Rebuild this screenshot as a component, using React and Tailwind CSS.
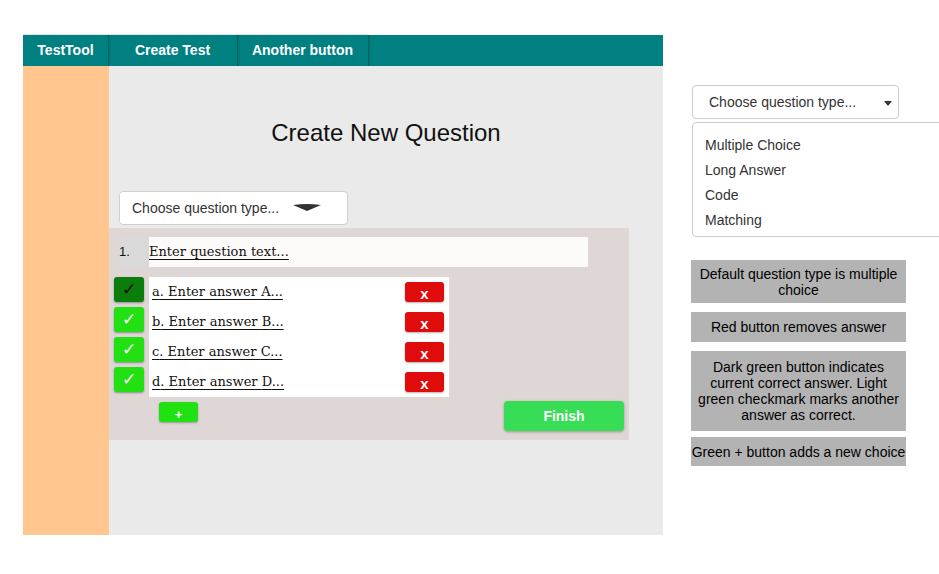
import React from "react";

const serif = { fontFamily: '"DejaVu Serif", "Liberation Serif", serif' };

function AnswerRow({ letter, correct }) {
  return (
    <div className="flex h-[30px] items-start">
      <div
        className={
          "mt-0 flex h-[25px] w-[30px] items-center justify-center rounded-[3px] shadow-[0_1px_2px_rgba(0,0,0,0.35)] text-[17px] font-bold " +
          (correct ? "bg-[#0a7d0a] text-[#111]" : "bg-[#22e012] text-white")
        }
        style={{ fontFamily: '"DejaVu Sans", sans-serif' }}
      >
        ✓
      </div>
      <div className="ml-[5px] flex h-[30px] w-[300px] items-start bg-white">
        <span
          className="ml-[3px] mt-[6px] text-[13px] leading-[18px] text-[#111] underline underline-offset-[3px]"
          style={serif}
        >
          {letter}. Enter answer {letter.toUpperCase()}...
        </span>
        <div className="ml-auto mr-[5px] mt-[5px] flex h-[20px] w-[39px] items-end justify-center rounded-[3px] bg-[#e00b0b] pb-[1px] text-[15px] font-bold leading-[15px] text-white shadow-[0_1px_2px_rgba(0,0,0,0.3)]">
          x
        </div>
      </div>
    </div>
  );
}

export default function App() {
  return (
    <div
      className="flex h-[574px] w-[939px] overflow-hidden bg-white pl-[23px] pt-[35px]"
      style={{ fontFamily: '"Liberation Sans", Arial, sans-serif' }}
    >
      {/* Left frame */}
      <div className="flex h-[500px] w-[640px] shrink-0 flex-col">
        <div className="flex h-[31px] bg-[#008080] text-[14px] font-bold text-white">
          <div className="flex w-[85px] items-center justify-center shadow-[1px_0_2px_rgba(0,0,0,0.35)]">TestTool</div>
          <div className="flex w-[129px] items-center justify-center shadow-[1px_0_2px_rgba(0,0,0,0.35)]">Create Test</div>
          <div className="flex w-[131px] items-center justify-center shadow-[1px_0_2px_rgba(0,0,0,0.35)]">Another button</div>
        </div>
        <div className="flex flex-1">
          <div className="w-[86px] bg-[#ffc690]" />
          <div className="flex flex-1 flex-col bg-[#eaeaea]">
            <div className="mt-[53px] text-center text-[24px] leading-[27px] text-[#111]">Create New Question</div>
            <div className="ml-[10px] mt-[45px] flex h-[34px] w-[229px] items-center rounded-[4px] border border-[#d0d0d0] bg-white pl-[12px] text-[14px] text-[#333]">
              <span>Choose question type...</span>
              <svg className="ml-[14px]" width="28" height="8" viewBox="0 0 28 8">
                <path d="M0 1 Q14 -1 28 1 L14 7 Z" fill="#333" />
              </svg>
            </div>
            <div className="mt-[3px] flex h-[212px] w-[520px] flex-col bg-[#dfd6d6] pl-[5px] pt-[9px]">
              <div className="ml-[5px] flex h-[30px]">
                <div className="w-[30px] bg-[#dadada] pt-[5px] text-[13px] text-[#111]">1.</div>
                <div className="flex w-[439px] items-center bg-[#fdfbfa]">
                  <span className="text-[13px] text-[#111] underline underline-offset-[3px]" style={serif}>
                    Enter question text...
                  </span>
                </div>
              </div>
              <div className="mt-[10px] flex flex-col">
                <AnswerRow letter="a" correct />
                <AnswerRow letter="b" />
                <AnswerRow letter="c" />
                <AnswerRow letter="d" />
              </div>
              <div className="flex items-start">
                <div className="ml-[45px] mt-[5px] flex h-[20px] w-[39px] items-end justify-center rounded-[3px] bg-[#20e212] pb-[1px] text-[13px] font-bold leading-[13px] text-white shadow-[0_1px_2px_rgba(0,0,0,0.3)]">
                  +
                </div>
                <div className="ml-[306px] mt-[4px] flex h-[30px] w-[120px] items-center justify-center rounded-[4px] bg-[#37dd55] text-[14px] font-bold text-white shadow-[0_1px_3px_rgba(0,0,0,0.3)]">
                  Finish
                </div>
              </div>
            </div>
          </div>
        </div>
      </div>

      {/* Right column */}
      <div className="ml-[28px] mt-[50px] flex w-[300px] shrink-0 flex-col">
        <div className="ml-[1px] flex h-[34px] w-[207px] items-center rounded-[4px] border border-[#cccccc] bg-white pl-[16px] text-[14px] text-[#333]">
          <span>Choose question type...</span>
          <svg className="ml-[28px] mt-[2px]" width="8" height="5" viewBox="0 0 8 5">
            <path d="M0 0 L8 0 L4 5 Z" fill="#333" />
          </svg>
        </div>
        <div className="ml-[1px] mt-[3px] flex h-[115px] w-[280px] flex-col rounded-[4px] border border-[#cccccc] bg-white pl-[12px] pt-[10px] text-[14px] leading-[25px] text-[#333]">
          <div className="h-[25px]">Multiple Choice</div>
          <div className="h-[25px]">Long Answer</div>
          <div className="h-[25px]">Code</div>
          <div className="h-[25px]">Matching</div>
        </div>
        <div className="mt-[23px] flex w-[215px] flex-col text-center text-[14px] leading-[16px] text-black">
          <div className="flex h-[43px] items-center justify-center bg-[#b3b3b3] px-[4px]">
            Default question type is multiple choice
          </div>
          <div className="mt-[9px] flex h-[30px] items-center justify-center bg-[#b3b3b3]">Red button removes answer</div>
          <div className="mt-[9px] flex h-[80px] items-center justify-center bg-[#b3b3b3] px-[2px]">
            Dark green button indicates current correct answer. Light green checkmark marks another answer as correct.
          </div>
          <div className="mt-[6px] flex h-[29px] items-center justify-center bg-[#b3b3b3] whitespace-nowrap">
            Green + button adds a new choice
          </div>
        </div>
      </div>
    </div>
  );
}
